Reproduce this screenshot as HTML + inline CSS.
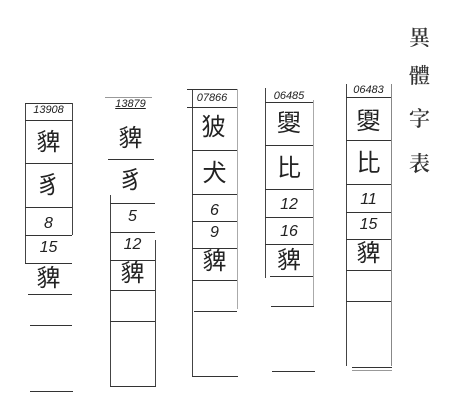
<!DOCTYPE html>
<html><head><meta charset="utf-8"><style>
body{margin:0;width:453px;height:403px;background:#fff;position:relative;overflow:hidden;font-family:"Liberation Sans","Noto Sans CJK TC",sans-serif;color:#222}
.h{position:absolute;height:1px;background:#333}
.v{position:absolute;width:1px;background:#444}
.t{position:absolute;text-align:center;line-height:1}
.c{font-size:24px;font-weight:400}
.n{font-size:16px;font-style:italic}
.s{font-size:11px;font-style:italic}
.ti{position:absolute;left:409px;font-family:"Noto Serif CJK SC",serif;font-size:21px;font-weight:600;color:#333}
</style></head><body>
<div class="ti" style="top:22px">異</div>
<div class="ti" style="top:60px">體</div>
<div class="ti" style="top:103px">字</div>
<div class="ti" style="top:148px">表</div>

<!-- col1 -->
<div class="v" style="left:25px;top:103px;height:160px"></div>
<div class="v" style="left:72px;top:103px;height:132px"></div>
<div class="h" style="left:25px;top:103px;width:47px"></div>
<div class="t s" style="left:25px;top:105px;width:47px">13908</div>
<div class="h" style="left:25px;top:120px;width:47px"></div>
<div class="t c" style="left:25px;top:131px;width:47px">貏</div>
<div class="h" style="left:25px;top:163px;width:47px"></div>
<div class="t c" style="left:25px;top:174px;width:47px">豸</div>
<div class="h" style="left:25px;top:207px;width:47px"></div>
<div class="t n" style="left:25px;top:216px;width:47px">8</div>
<div class="h" style="left:25px;top:235px;width:47px"></div>
<div class="t n" style="left:25px;top:240px;width:47px">15</div>
<div class="h" style="left:25px;top:263px;width:47px"></div>
<div class="t c" style="left:25px;top:267px;width:47px">貏</div>
<div class="h" style="left:28px;top:294px;width:44px"></div>
<div class="h" style="left:30px;top:325px;width:42px"></div>
<div class="h" style="left:30px;top:391px;width:43px"></div>

<!-- col2 -->
<div class="v" style="left:110px;top:195px;height:192px"></div>
<div class="v" style="left:155px;top:240px;height:146px"></div>
<div class="t s" style="left:107px;top:99px;width:47px;text-decoration:underline">13879</div>
<div class="h" style="left:105px;top:97px;width:47px;background:#999"></div>
<div class="t c" style="left:107px;top:127px;width:47px">貏</div>
<div class="h" style="left:108px;top:159px;width:46px"></div>
<div class="t c" style="left:108px;top:169px;width:46px">豸</div>
<div class="h" style="left:110px;top:203px;width:45px"></div>
<div class="t n" style="left:110px;top:209px;width:45px">5</div>
<div class="h" style="left:110px;top:232px;width:45px"></div>
<div class="t n" style="left:110px;top:237px;width:45px">12</div>
<div class="h" style="left:110px;top:260px;width:45px"></div>
<div class="t c" style="left:110px;top:262px;width:45px">貏</div>
<div class="h" style="left:110px;top:290px;width:45px"></div>
<div class="h" style="left:110px;top:321px;width:45px"></div>
<div class="h" style="left:110px;top:386px;width:46px"></div>

<!-- col3 -->
<div class="v" style="left:192px;top:89px;height:287px"></div>
<div class="v" style="left:237px;top:89px;height:220px;background:#aaa"></div>
<div class="h" style="left:187px;top:89px;width:50px"></div>
<div class="t s" style="left:187px;top:93px;width:50px">07866</div>
<div class="h" style="left:187px;top:107px;width:50px"></div>
<div class="t c" style="left:190px;top:116px;width:47px">狓</div>
<div class="h" style="left:192px;top:150px;width:45px"></div>
<div class="t c" style="left:192px;top:162px;width:45px">犬</div>
<div class="h" style="left:192px;top:194px;width:45px"></div>
<div class="t n" style="left:192px;top:203px;width:45px">6</div>
<div class="h" style="left:192px;top:221px;width:45px"></div>
<div class="t n" style="left:192px;top:225px;width:45px">9</div>
<div class="h" style="left:192px;top:248px;width:45px"></div>
<div class="t c" style="left:192px;top:250px;width:45px">貏</div>
<div class="h" style="left:192px;top:280px;width:45px"></div>
<div class="h" style="left:194px;top:311px;width:43px"></div>
<div class="h" style="left:192px;top:376px;width:46px"></div>

<!-- col4 -->
<div class="v" style="left:265px;top:88px;height:190px"></div>
<div class="v" style="left:313px;top:100px;height:206px;background:#aaa"></div>
<div class="t s" style="left:265px;top:91px;width:48px">06485</div>
<div class="h" style="left:265px;top:102px;width:48px"></div>
<div class="t c" style="left:265px;top:112px;width:48px">夓</div>
<div class="h" style="left:265px;top:145px;width:48px"></div>
<div class="t c" style="left:265px;top:157px;width:48px">比</div>
<div class="h" style="left:265px;top:189px;width:48px"></div>
<div class="t n" style="left:265px;top:197px;width:48px">12</div>
<div class="h" style="left:265px;top:217px;width:48px"></div>
<div class="t n" style="left:265px;top:224px;width:48px">16</div>
<div class="h" style="left:265px;top:244px;width:48px"></div>
<div class="t c" style="left:265px;top:249px;width:48px">貏</div>
<div class="h" style="left:270px;top:276px;width:43px"></div>
<div class="h" style="left:271px;top:306px;width:43px"></div>
<div class="h" style="left:272px;top:371px;width:43px"></div>

<!-- col5 -->
<div class="v" style="left:346px;top:84px;height:282px"></div>
<div class="v" style="left:391px;top:84px;height:282px;background:#888"></div>
<div class="t s" style="left:346px;top:85px;width:45px">06483</div>
<div class="h" style="left:346px;top:97px;width:45px"></div>
<div class="t c" style="left:346px;top:110px;width:45px">夓</div>
<div class="h" style="left:346px;top:140px;width:45px"></div>
<div class="t c" style="left:346px;top:152px;width:45px">比</div>
<div class="h" style="left:346px;top:184px;width:45px"></div>
<div class="t n" style="left:346px;top:192px;width:45px">11</div>
<div class="h" style="left:346px;top:212px;width:45px"></div>
<div class="t n" style="left:346px;top:217px;width:45px">15</div>
<div class="h" style="left:346px;top:239px;width:45px"></div>
<div class="t c" style="left:346px;top:242px;width:45px">貏</div>
<div class="h" style="left:346px;top:270px;width:45px"></div>
<div class="h" style="left:346px;top:301px;width:45px"></div>
<div class="h" style="left:352px;top:367px;width:40px"></div>
<div class="h" style="left:352px;top:370px;width:40px;background:#999"></div>
</body></html>
